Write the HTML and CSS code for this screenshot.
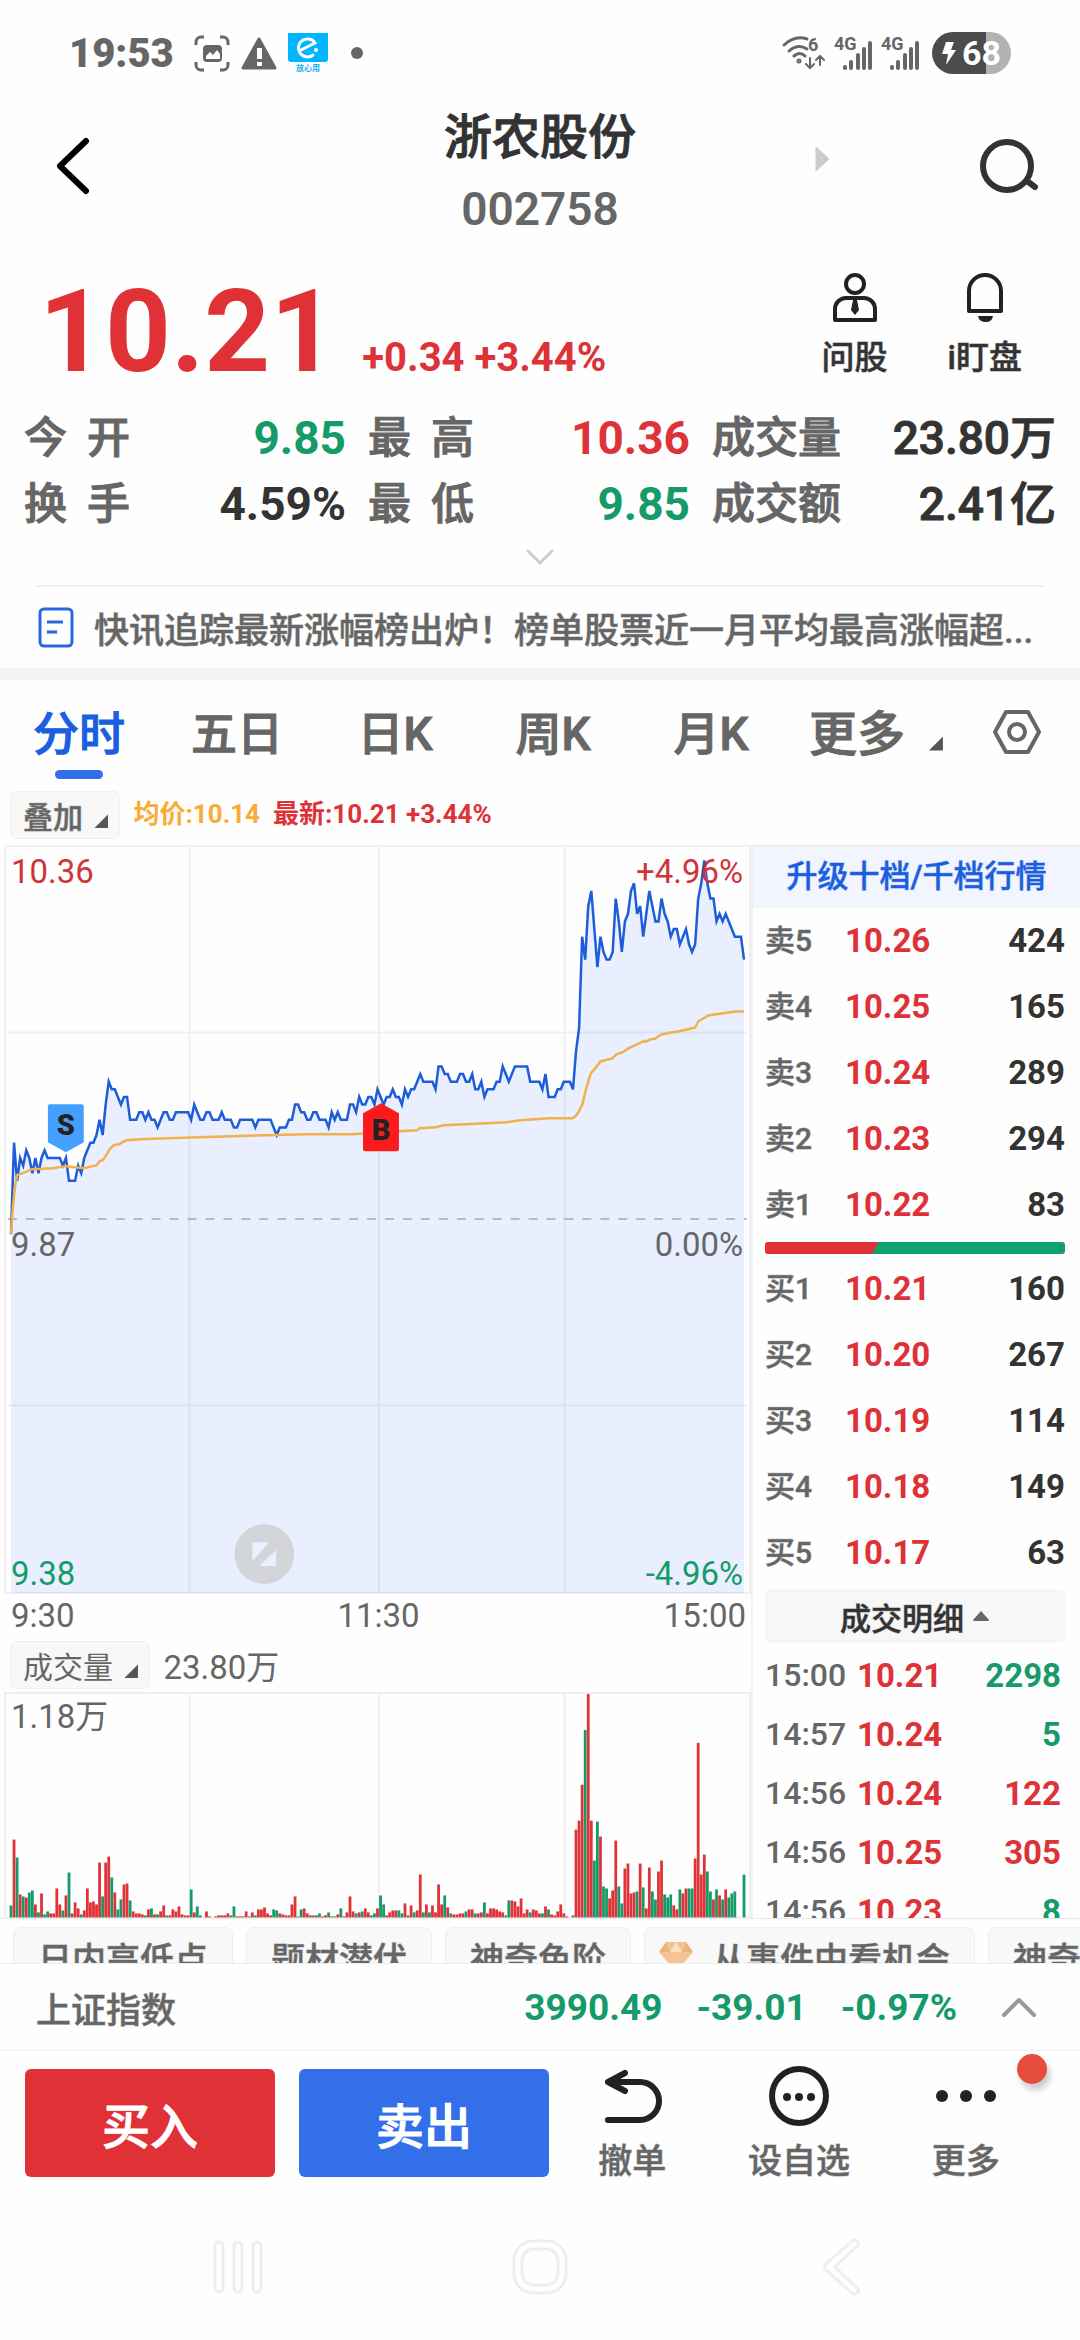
FILE: index.html
```html
<!DOCTYPE html>
<html lang="zh-CN">

<head>
    <meta charset="UTF-8">
    <meta name="viewport" content="width=device-width, initial-scale=1.0">
    <title>浙农股份 002758</title>

    <link rel="stylesheet" href="styles.css">
</head>

<body>

    <div class="status">
        <span class="clock">19:53</span>
        <svg width="36" height="37" viewBox="0 0 36 37" fill="none" stroke="#666" stroke-width="3">
            <path d="M2 10V7a5 5 0 0 1 5-5h3M26 2h3a5 5 0 0 1 5 5v3M34 27v3a5 5 0 0 1-5 5h-3M10 35H7a5 5 0 0 1-5-5v-3" />
            <rect x="9" y="10" width="19" height="17" rx="4" fill="#666" stroke="none" />
            <path d="M12 24v-3l4-4 3 3 4-5 3 4v5z" fill="#fff" stroke="none" />
        </svg>
        <svg width="36" height="34" viewBox="0 0 36 34">
            <path d="M18 3L34 32H2z" fill="#666" stroke="#666" stroke-width="3" stroke-linejoin="round" />
            <path d="M16 12h5v11h-5zM16 26h5v4h-5z" fill="#fff" />
        </svg>
        <svg width="40" height="40" viewBox="0 0 40 40">
            <path d="M0 0h40v26q0 3-3 3H3q-3 0-3-3z" fill="#00b4ff" />
            <path d="M13 17l14-7A9 9 0 1 0 25 22" fill="none" stroke="#fff" stroke-width="3" stroke-linecap="round" />
            <circle cx="28" cy="17" r="2" fill="#fff" />
            <text x="20" y="38" font-size="8" font-weight="700" fill="#19b0f0" text-anchor="middle">放心用</text>
        </svg>
        <span class="dot"></span>
        <div class="signals">
            <svg width="44" height="36" viewBox="0 0 44 36" fill="none" stroke="#666" stroke-width="3" stroke-linecap="round">
                <path d="M2 10Q13 0 25 4M7 16q9-8 18-2M12 21q6-5 11 0" />
                <circle cx="17" cy="26" r="1" />
                <path d="M28 23v9M24 29l4 4 4-4M38 30v-9M34 25l4-4 4 4" stroke-width="2" />
                <text x="26" y="16" font-size="18" font-weight="700" fill="#666" stroke="none">6</text>
            </svg>
            <svg width="39" height="36" viewBox="0 0 39 36" stroke="#666" stroke-width="4" stroke-linecap="round">
                <path d="M11 32v1M17 27v6M24 20v13M30 14v19M36 8v25" />
                <text x="0" y="15" font-size="18" font-weight="700" fill="#666" stroke="none">4G</text>
            </svg>
            <svg width="39" height="36" viewBox="0 0 39 36" stroke="#666" stroke-width="4" stroke-linecap="round">
                <path d="M11 32v1M17 27v6M24 20v13M30 14v19M36 8v25" />
                <text x="0" y="15" font-size="18" font-weight="700" fill="#666" stroke="none">4G</text>
            </svg>
            <div class="battery">
                <svg width="14" height="23" viewBox="0 0 14 23"><path d="M4 0h8L9 8h5L4 23l2-11H0z" fill="#fff" /></svg>
                <span>68</span>
            </div>
        </div>
    </div>

    <header>
        <button class="back" aria-label="返回">
            <svg width="34" height="58" viewBox="0 0 34 58"><path d="M30 4L4 29l26 25" fill="none" stroke="#000" stroke-width="6" stroke-linecap="round" stroke-linejoin="round" /></svg>
        </button>
        <div class="name">
            <h1>浙农股份</h1>
            <p>002758</p>
        </div>
        <button class="next" aria-label="下一只">
            <svg width="15" height="26" viewBox="0 0 15 26"><path d="M1 1v24L14 13z" fill="#ccc" stroke="#ccc" stroke-linejoin="round" /></svg>
        </button>
        <button class="search" aria-label="搜索">
            <svg width="62" height="56" viewBox="0 0 62 56" fill="none" stroke="#333"><circle cx="29" cy="28" r="24" stroke-width="6" /><path d="M49 43l8 6" stroke-width="6" stroke-linecap="round" /></svg>
        </button>
    </header>

    <section class="quote">
        <strong class="price">10.21</strong>
        <span class="change">+0.34 +3.44%</span>
        <button class="tool">
            <svg width="46" height="52" viewBox="0 0 46 52" fill="none" stroke="#222" stroke-width="4">
                <circle cx="23" cy="12" r="9" />
                <path d="M3 48V37a11 11 0 0 1 11-11h18a11 11 0 0 1 11 11v11z" stroke-linejoin="round" />
                <path d="M21 28h4l2 10-4 5-4-5z" fill="#222" stroke="none" />
            </svg>
            问股
        </button>
        <button class="tool">
            <svg width="38" height="52" viewBox="0 0 38 52" fill="none" stroke="#222" stroke-width="4">
                <path d="M3 39V19a16 16 0 0 1 32 0v20z" stroke-linejoin="round" />
                <path d="M12 44h15q-1 6-7 6-7 0-8-6z" fill="#222" stroke="none" />
            </svg>
            i盯盘
        </button>
    </section>

    <dl class="stats">
        <dt><span>今</span><span>开</span></dt><dd class="down">9.85</dd>
        <dt><span>最</span><span>高</span></dt><dd class="up">10.36</dd>
        <dt>成交量</dt><dd>23.80万</dd>
        <dt><span>换</span><span>手</span></dt><dd>4.59%</dd>
        <dt><span>最</span><span>低</span></dt><dd class="down">9.85</dd>
        <dt>成交额</dt><dd>2.41亿</dd>
    </dl>
    <button class="expand" aria-label="展开">
        <svg width="28" height="16" viewBox="0 0 28 16"><path d="M2 2l12 12L26 2" fill="none" stroke="#ccc" stroke-width="3" stroke-linecap="round" /></svg>
    </button>

    <a class="news" href="#">
        <svg width="36" height="41" viewBox="0 0 36 41" fill="none" stroke="#2a66e0" stroke-width="3">
            <rect x="2" y="2" width="32" height="37" rx="4" />
            <path d="M9 15h16M9 25h10" />
        </svg>
        <span>快讯追踪最新涨幅榜出炉！榜单股票近一月平均最高涨幅超...</span>
    </a>

    <nav class="tabs">
        <button class="active">分时</button>
        <button>五日</button>
        <button>日K</button>
        <button>周K</button>
        <button>月K</button>
        <button class="more">更多 <i class="corner"></i></button>
        <button class="setting" aria-label="设置">
            <svg width="50" height="46" viewBox="0 0 50 46" fill="none" stroke="#666" stroke-width="4"><path d="M14 3h22l11 20-11 20H14L3 23z" stroke-linejoin="round" /><circle cx="25" cy="23" r="8" /></svg>
        </button>
    </nav>

    <div class="legend">
        <button class="pick">叠加 <i class="corner"></i></button>
        <span class="avg">均价:10.14</span>
        <span class="up">最新:10.21 +3.44%</span>
    </div>

    <main>
        <div class="charts">
            <svg class="chart" viewBox="0 0 753 751">
                <path class="grid" d="M5 1H752V750H5zM190 1V750M380 1V750M566 1V750M8 188H749M8 562H749" />
                <path id="area" class="area" />
                <path class="zero" d="M8 375H749" />
                <polyline id="priceLine" class="price-line" />
                <polyline id="avgLine" class="avg-line" />
                <path d="M48 262q0-2 2-2h32q2 0 2 2v36l-18 10-18-10z" fill="#459fff" />
                <text class="mark" x="66" y="291">S</text>
                <path d="M364 269l18-10 18 10v36q0 2-2 2h-32q-2 0-2-2z" fill="#fb1a1c" />
                <text class="mark" x="382" y="296">B</text>
                <circle cx="265" cy="711" r="30" fill="#d4d5d9" />
                <path d="M254 699h14q1 0 1 1l-15 17q-1 0-1-1v-16zM277 707v15q0 1-1 1h-14q-1 0-1-1z" fill="#eaf0ff" />
                <text x="11" y="38" class="up">10.36</text>
                <text x="745" y="38" class="up end">+4.96%</text>
                <text x="11" y="412">9.87</text>
                <text x="745" y="412" class="end">0.00%</text>
                <text x="11" y="742" class="down">9.38</text>
                <text x="745" y="742" class="down end">-4.96%</text>
            </svg>
            <div class="times"><span>9:30</span><span>11:30</span><span>15:00</span></div>
            <div class="volume-head">
                <button class="pick">成交量 <i class="corner"></i></button>
                <span>23.80万</span>
            </div>
            <svg class="chart" viewBox="0 0 753 227">
                <path class="grid" d="M5 226V1H752V226zM190 1V226M380 1V226M566 1V226" />
                <g id="bars"></g>
                <text x="11" y="36">1.18万</text>
            </svg>
        </div>

        <aside>
            <a class="upgrade" href="#">升级十档/千档行情</a>
            <table class="book">
                <tr><th>卖5</th><td class="up">10.26</td><td>424</td></tr>
                <tr><th>卖4</th><td class="up">10.25</td><td>165</td></tr>
                <tr><th>卖3</th><td class="up">10.24</td><td>289</td></tr>
                <tr><th>卖2</th><td class="up">10.23</td><td>294</td></tr>
                <tr><th>卖1</th><td class="up">10.22</td><td>83</td></tr>
            </table>
            <div class="ratio"></div>
            <table class="book">
                <tr><th>买1</th><td class="up">10.21</td><td>160</td></tr>
                <tr><th>买2</th><td class="up">10.20</td><td>267</td></tr>
                <tr><th>买3</th><td class="up">10.19</td><td>114</td></tr>
                <tr><th>买4</th><td class="up">10.18</td><td>149</td></tr>
                <tr><th>买5</th><td class="up">10.17</td><td>63</td></tr>
            </table>
            <button class="detail">成交明细 <svg width="18" height="12" viewBox="0 0 18 12"><path d="M9 1l8 9q0 1-1 1H2q-1 0-1-1z" fill="#666" /></svg></button>
            <div class="deals">
                <table>
                    <tr><th>15:00</th><td class="up">10.21</td><td class="down">2298</td></tr>
                    <tr><th>14:57</th><td class="up">10.24</td><td class="down">5</td></tr>
                    <tr><th>14:56</th><td class="up">10.24</td><td class="up">122</td></tr>
                    <tr><th>14:56</th><td class="up">10.25</td><td class="up">305</td></tr>
                    <tr><th>14:56</th><td class="up">10.23</td><td class="down">8</td></tr>
                </table>
            </div>
        </aside>
    </main>

    <div class="chips">
        <button>日内高低点</button>
        <button>题材潜伏</button>
        <button>神奇色阶</button>
        <button class="gem">
            <svg width="34" height="30" viewBox="0 0 34 30"><path d="M7 0h20l7 10-17 20L0 10z" fill="#f3c593" /><path d="M0 10L7 0l4 10zM27 0l7 10H23z" fill="#e9b47d" /><path d="M11 10L17 0l6 10z" fill="#fde0bd" /></svg>
            从事件中看机会
        </button>
        <button>神奇九转</button>
    </div>

    <div class="index">
        <span class="index-name">上证指数</span>
        <span>3990.49</span>
        <span>-39.01</span>
        <span>-0.97%</span>
        <button aria-label="展开指数">
            <svg width="34" height="20" viewBox="0 0 34 20"><path d="M2 18L17 3l15 15" fill="none" stroke="#999" stroke-width="4" stroke-linecap="round" stroke-linejoin="round" /></svg>
        </button>
    </div>

    <footer>
        <button class="trade buy">买入</button>
        <button class="trade sell">卖出</button>
        <button class="action">
            <svg width="60" height="62" viewBox="0 0 60 62" fill="none" stroke="#222" stroke-width="6" stroke-linecap="round" stroke-linejoin="round"><path d="M23 8L6 17l17 9M6 17h32a19 19 0 0 1 0 38H6" /></svg>
            撤单
        </button>
        <button class="action">
            <svg width="60" height="62" viewBox="0 0 60 62" fill="none" stroke="#222" stroke-width="6"><circle cx="30" cy="31" r="27" /><g fill="#222" stroke="none"><circle cx="18" cy="32" r="4" /><circle cx="30" cy="32" r="4" /><circle cx="42" cy="32" r="4" /></g></svg>
            设自选
        </button>
        <button class="action">
            <svg width="60" height="62" viewBox="0 0 60 62" fill="#222"><circle cx="6" cy="31" r="6" /><circle cx="30" cy="31" r="6" /><circle cx="54" cy="31" r="6" /></svg>
            更多
            <i class="badge"></i>
        </button>
    </footer>

    <div class="system">
        <button aria-label="最近">
            <svg width="50" height="54" viewBox="0 0 50 54"><rect x="2" y="2" width="8" height="50" rx="4" /><rect x="21" y="2" width="8" height="50" rx="4" /><rect x="40" y="2" width="8" height="50" rx="4" /></svg>
        </button>
        <button aria-label="主页">
            <svg width="56" height="56" viewBox="0 0 56 56"><rect x="2" y="2" width="52" height="52" rx="19" /><rect x="10" y="10" width="36" height="36" rx="12" /></svg>
        </button>
        <button aria-label="返回桌面">
            <svg width="38" height="58" viewBox="0 0 38 58"><path d="M29 3L3 26q-3 3 0 6l26 23q3 2 5 0 3-3 0-5L12 29 34 8q3-3 0-5-2-2-5 0z" /></svg>
        </button>
    </div>

    <script>
        const svgNS = "http://www.w3.org/2000/svg";

        // 每分钟价格，单位为分，相对昨收 9.87
        const prices = [
            -2, 10, 5, 8, 7, 9, 8, 6, 8, 6, 8, 9, 8, 8, 8, 8, 8, 7, 8, 5, 5, 5, 7, 6, 8, 9, 10, 10, 11, 13,
            11, 15, 18, 17, 17, 16, 15, 16, 16, 13, 13, 13, 14, 14, 13, 14, 13, 13, 12, 13, 14, 14, 13, 13, 14, 14, 14, 14, 14, 13,
            15, 14, 13, 13, 14, 14, 13, 13, 13, 14, 13, 13, 13, 12, 12, 13, 13, 13, 13, 13, 12, 13, 13, 13, 13, 13, 12, 11, 12, 12,
            12, 13, 13, 15, 15, 14, 14, 13, 13, 14, 14, 13, 13, 13, 12, 14, 13, 14, 13, 13, 13, 15, 15, 14, 16, 15, 15, 16, 16, 15,
            17, 16, 15, 16, 16, 17, 16, 16, 15, 17, 16, 17, 17, 18, 19, 18, 18, 18, 18, 17, 20, 20, 19, 19, 18, 18, 18, 19, 19, 18,
            18, 19, 17, 17, 18, 16, 17, 17, 17, 18, 18, 20, 19, 18, 19, 20, 20, 20, 20, 20, 18, 18, 18, 18, 17, 19, 16, 16, 16, 17,
            17, 18, 18, 18, 17, 22, 25, 37, 34, 41, 43, 38, 33, 37, 35, 34, 34, 35, 42, 39, 35, 39, 40, 43, 44, 40, 41, 37, 40, 43,
            41, 39, 39, 42, 40, 39, 37, 38, 38, 36, 37, 38, 36, 35, 36, 42, 44, 47, 44, 42, 42, 39, 40, 39, 40, 39, 38, 37, 37, 37, 34
        ];

        // 均价线 [x, y]
        const average = [
            [11, 390], [13, 362], [15, 343], [17, 331], [23, 329], [32, 325], [53, 324], [66, 322], [84, 324], [97, 321],
            [100, 317], [103, 316], [106, 312], [110, 305], [114, 301], [119, 300], [127, 296], [140, 295], [167, 294],
            [200, 293], [267, 291], [307, 290], [353, 290], [400, 287], [418, 286], [421, 284], [437, 283], [445, 281],
            [508, 278], [522, 276], [550, 274], [574, 274], [577, 272], [580, 268], [584, 260], [587, 247], [591, 233],
            [593, 228], [596, 225], [599, 221], [602, 217], [614, 214], [618, 210], [624, 208], [630, 204], [645, 197],
            [648, 197], [652, 195], [657, 194], [663, 190], [673, 188], [680, 187], [693, 184], [697, 183], [700, 177],
            [705, 174], [710, 171], [737, 167], [746, 167]
        ];

        // 每分钟成交量，r 涨 g 跌
        const volumes = ("g12 r78 g60 r23 g21 r20 g25 g27 r13 g5 r24 g3 g6 r4 r4 r29 r13 g7 r22 g45 r4 r15 r9 g3 r7 r29 r15 r16 r13 r55 " +
            "g21 r55 r61 g40 r25 g8 g18 r33 r34 g17 r6 r4 r4 r3 g2 r8 g9 r3 g3 r6 r12 g2 r2 r8 r6 r11 r3 r2 r2 g28 " +
            "r5 g11 g2 g0 r6 r1 r0 r1 r2 r2 r2 r4 g2 g11 r1 r1 r1 r6 g1 r5 g2 r8 r8 r10 r4 r2 g8 g7 r4 r3 " +
            "r2 r2 r13 r21 g1 g8 r9 r4 r2 g2 r2 g4 r1 r2 g5 r1 g1 r3 g9 r1 r5 r21 r6 g4 r5 g6 r9 r5 g2 g4 " +
            "r9 g22 g13 r2 r5 r7 r7 g7 g4 r14 r2 r12 g5 r7 r43 g5 r13 g5 r12 r5 r33 r13 g22 r10 g4 r3 r3 r4 r4 g6 " +
            "r8 r8 g4 r4 r5 g15 r4 r9 r9 r8 r6 r5 g2 g17 r17 r16 r11 r19 r4 r8 g5 r8 r7 r4 g4 r11 g8 r3 r2 r6 " +
            "r13 r4 r1 g0 g2 r88 r97 r133 g188 r224 r97 g57 g96 r81 g31 g29 r19 r27 r77 g31 g14 r49 r54 r24 r25 g26 r54 g30 r9 r50 " +
            "g26 g18 r46 r57 g23 g20 g23 r12 r8 g28 r24 r29 g29 g29 r59 r175 r43 r63 g46 g26 r18 g28 r22 g18 r28 g20 g24 g26 g0 g0 g43").split(" ");

        function minuteX(minute) {
            return 11 + minute * 735 / 240;
        }

        function toPoints(list) {
            return list.map(p => p.join(",")).join(" ");
        }

        const points = prices.map((p, i) => [minuteX(i), 375 - p * 7.65]);
        document.getElementById("priceLine").setAttribute("points", toPoints(points));
        document.getElementById("avgLine").setAttribute("points", toPoints(average));
        document.getElementById("area").setAttribute("d", "M11,750 L" + toPoints(points) + " L746,750 Z");

        volumes.forEach((v, i) => {
            const height = Number(v.slice(1));
            const bar = document.createElementNS(svgNS, "rect");
            bar.setAttribute("class", v[0] === "r" ? "bar-up" : "bar-down");
            bar.setAttribute("x", minuteX(i) - 1.4);
            bar.setAttribute("y", 226 - height);
            bar.setAttribute("width", 2.8);
            bar.setAttribute("height", height);
            document.getElementById("bars").appendChild(bar);
        });
    </script>

</body>

</html>
```
FILE: styles.css
```css
* {
    box-sizing: border-box;
}

body {
    margin: 0;
    font-family: Roboto, "Noto Sans CJK SC", sans-serif;
    font-weight: 500;
    background-color: #fefefe;
    color: #666;
    min-height: 100vh;
    overflow-x: hidden;
}

button {
    font: inherit;
    color: inherit;
    background: none;
    border: none;
    padding: 0;
    cursor: pointer;
}

a {
    color: inherit;
    text-decoration: none;
}

h1, p, dl, dd {
    margin: 0;
}

svg {
    display: block;
    flex: none;
    overflow: visible;
}

table {
    border-collapse: collapse;
    width: 100%;
}

th, td {
    padding: 0;
    font-weight: 700;
}

/* 中文加粗一点 */
h1, dt, .tabs button, .trade, .stats dd:nth-of-type(3n) {
    -webkit-text-stroke: 1px currentColor;
}

/* 小字描边淡一些 */
.news, .legend .pick, .book th, .chips button, .index-name, .action {
    -webkit-text-stroke: 1px rgba(102, 102, 102, 0.5);
}

.tool, .detail {
    -webkit-text-stroke: 1px rgba(51, 51, 51, 0.5);
}

.upgrade {
    -webkit-text-stroke: 1px rgba(26, 95, 224, 0.5);
}

.up {
    color: #dd3338;
}

.down {
    color: #159b69;
}

/* 状态栏 */
.status {
    display: flex;
    align-items: center;
    gap: 11px;
    height: 106px;
    padding: 0 69px;
}

.clock {
    font-size: 40px;
    font-weight: 900;
    margin-right: 9px;
}

.dot {
    width: 12px;
    height: 12px;
    border-radius: 50%;
    background-color: #666;
    margin-left: 12px;
}

.signals {
    display: flex;
    align-items: center;
    gap: 8px;
    margin-left: auto;
}

.battery {
    display: flex;
    align-items: center;
    justify-content: center;
    gap: 6px;
    width: 79px;
    height: 42px;
    margin-left: 4px;
    border-radius: 21px;
    background: linear-gradient(to right, #4c4c4c 68%, #b2b2b2 68%);
    color: white;
    font-size: 34px;
    font-weight: 700;
}

/* 标题 */
header {
    display: grid;
    grid-template-columns: 1fr auto 1fr auto;
    align-items: start;
    height: 150px;
    padding: 0 40px 0 56px;
}

header button {
    height: 120px;
}

.back {
    justify-self: start;
}

.name {
    text-align: center;
    margin-left: 46px;
}

.name h1 {
    font-size: 48px;
    line-height: 64px;
    font-weight: 500;
    color: #333;
}

.name p {
    font-size: 46px;
    line-height: 78px;
    font-weight: 600;
}

.next {
    justify-self: center;
    padding-bottom: 14px;
    margin-left: 30px;
}

/* 报价 */
.quote {
    display: flex;
    align-items: baseline;
    padding: 16px 58px 0 39px;
    color: #dd3338;
}

.price {
    font-size: 115px;
    line-height: 120px;
    font-weight: 700;
    color: #e03136;
}

.change {
    font-size: 40px;
    font-weight: 700;
    margin-left: 26px;
    margin-right: auto;
}

.tool {
    display: flex;
    flex-direction: column;
    align-items: center;
    align-self: flex-start;
    gap: 14px;
    margin-left: 60px;
    font-size: 33px;
    line-height: 40px;
    color: #333;
}

.stats {
    display: grid;
    grid-template-columns: 106px 1fr 128px 1fr 150px 1fr;
    padding: 13px 24px 0;
    line-height: 66px;
    white-space: nowrap;
}

.stats dt {
    display: flex;
    justify-content: space-between;
    font-size: 43px;
}

.stats dt:not(:nth-of-type(3n+1)) {
    padding-left: 22px;
}

.stats dd {
    font-size: 46px;
    font-weight: 700;
    text-align: right;
    color: #333;
}

.stats dd.up {
    color: #dd3338;
}

.stats dd.down {
    color: #159b69;
}

.stats dd:nth-of-type(3n) {
    font-weight: 500;
}

.expand {
    display: flex;
    justify-content: center;
    width: 100%;
    height: 48px;
    padding-top: 12px;
}

.news {
    display: flex;
    align-items: center;
    gap: 20px;
    height: 83px;
    margin: 0 36px;
    padding-left: 2px;
    border-top: 2px solid #f0f0f0;
    font-size: 35px;
    white-space: nowrap;
}

/* 周期 */
.tabs {
    display: flex;
    height: 111px;
    border-top: 12px solid #f4f4f4;
    padding-right: 38px;
    font-size: 46px;
}

.tabs button {
    flex: 1;
    height: 99px;
}

.tabs .active {
    color: #1a5fe0;
    position: relative;
}

.tabs .active::after {
    content: "";
    position: absolute;
    left: 50%;
    bottom: 0;
    width: 48px;
    height: 9px;
    margin-left: -24px;
    border-radius: 5px;
    background-color: #326ee6;
}

.tabs .more {
    flex: none;
    width: 172px;
    padding-left: 19px;
    text-align: left;
    font-size: 48px;
}

.tabs .more .corner {
    margin-left: 12px;
}

.tabs .setting {
    flex: none;
    width: 80px;
    display: flex;
    align-items: center;
    justify-content: flex-end;
    padding-top: 5px;
}

.corner {
    display: inline-block;
    width: 14px;
    height: 14px;
    margin-left: 4px;
    background-color: #555;
    clip-path: polygon(100% 0, 100% 100%, 0 100%);
}

.legend {
    display: flex;
    align-items: center;
    gap: 13px;
    height: 66px;
    padding: 12px 10px 6px;
    font-size: 26px;
    font-weight: 700;
}

.legend span {
    padding-bottom: 8px;
}

.pick {
    height: 48px;
    padding: 0 11px 0 12px;
    border: 1px solid #f0f0f0;
    border-radius: 6px;
    background-color: #f8f8f8;
    font-size: 30px;
    font-weight: 500;
}

.avg {
    color: #f9ab35;
}

/* 图表 */
main {
    display: grid;
    grid-template-columns: minmax(0, 1fr) 327px;
}

.charts {
    font-size: 33px;
    font-weight: 400;
    border-right: 2px solid #f0f0f0;
}

.chart {
    width: 100%;
    height: auto;
}

.chart text {
    font-size: 33px;
    fill: #666;
}

.chart text.up {
    fill: #d03338;
}

.chart text.down {
    fill: #159b69;
}

.chart .end {
    text-anchor: end;
}

.chart .mark {
    font-size: 29px;
    font-weight: 900;
    fill: #222;
    text-anchor: middle;
}

.grid {
    fill: none;
    stroke: #efefef;
    stroke-width: 2;
}

.area {
    fill: rgba(45, 105, 255, 0.1);
}

.zero {
    stroke: #7f8594;
    stroke-dasharray: 9 9;
}

.price-line, .avg-line {
    fill: none;
    stroke: #1d5dd9;
    stroke-width: 2.5;
}

.avg-line {
    stroke: #f2b04a;
}

.bar-up {
    fill: #df3338;
}

.bar-down {
    fill: #159b69;
}

.times {
    display: grid;
    grid-template-columns: 1fr auto 1fr;
    padding: 0 5px 0 11px;
    line-height: 44px;
}

.times span:last-child {
    text-align: right;
}

.volume-head {
    display: flex;
    align-items: center;
    gap: 13px;
    height: 54px;
    padding: 0 10px;
}

.volume-head .pick {
    font-weight: 400;
}

/* 盘口 */
aside {
    border-top: 1px solid #e3e6ef;
}

.upgrade {
    display: block;
    background-color: #f2f5fd;
    color: #1a5fe0;
    font-size: 31px;
    line-height: 62px;
    text-align: center;
}

.book, .ratio, .detail, .deals {
    margin: 0 15px 0 12px;
}

.book, .deals table {
    width: 300px;
    font-size: 33px;
    line-height: 66px;
    table-layout: fixed;
}

.book th, .deals th {
    width: 80px;
    text-align: left;
    font-size: 30px;
    font-weight: 500;
}

.book td:last-child {
    text-align: right;
    color: #333;
}

.ratio {
    height: 12px;
    margin-top: 4px;
    margin-bottom: 2px;
    border-radius: 3px;
    background: linear-gradient(120deg, #e03136 37%, #12a06b 37%);
}

.detail {
    display: flex;
    align-items: center;
    justify-content: center;
    gap: 8px;
    width: 300px;
    height: 54px;
    margin-top: 3px;
    border-radius: 6px;
    background-color: #f7f7f7;
    font-size: 31px;
    color: #333;
}

.deals {
    height: 275px;
    padding-top: 3px;
    overflow: hidden;
}

.deals table {
    line-height: 59px;
}

.deals th {
    width: 92px;
    font-size: 32px;
}

.deals td:last-child {
    text-align: right;
    padding-right: 4px;
}

/* 功能标签 */
.chips {
    display: flex;
    align-items: flex-start;
    gap: 13px;
    height: 45px;
    padding: 8px 0 0 13px;
    border-top: 1px solid #e8e8e8;
    overflow: hidden;
}

.chips button {
    flex: none;
    height: 60px;
    padding: 0 24px;
    border: 1px solid #eee;
    border-radius: 8px;
    background-color: #f8f8f8;
    font-size: 34px;
    white-space: nowrap;
}

.chips .gem {
    display: flex;
    align-items: center;
    gap: 19px;
    padding: 0 24px 0 14px;
}

.index {
    display: flex;
    align-items: center;
    gap: 34px;
    height: 88px;
    padding: 0 44px 0 36px;
    border-top: 1px solid #eee;
    border-bottom: 1px solid #eee;
    font-size: 37px;
    font-weight: 700;
    color: #159b69;
}

.index-name {
    margin-right: auto;
    font-size: 35px;
    font-weight: 500;
    color: #666;
}

.index button {
    margin-left: 11px;
}

/* 底部操作 */
footer {
    display: flex;
    padding: 14px 31px 0 25px;
}

.trade {
    width: 250px;
    height: 108px;
    margin-top: 4px;
    border-radius: 6px;
    background-color: #e03136;
    color: white;
    font-size: 48px;
}

.sell {
    margin-left: 24px;
    background-color: #336fe8;
}

.action {
    display: flex;
    flex: 1;
    flex-direction: column;
    align-items: center;
    gap: 14px;
    position: relative;
    font-size: 34px;
    line-height: 40px;
}

.badge {
    position: absolute;
    right: 2px;
    top: -11px;
    width: 30px;
    height: 30px;
    border-radius: 50%;
    background-color: #e54d3e;
    box-shadow: 3px 6px 6px rgba(0, 0, 0, 0.2);
}

.system {
    display: flex;
    justify-content: space-between;
    align-items: center;
    height: 120px;
    margin-top: 26px;
    padding: 0 210px;
}

.system button {
    display: flex;
    justify-content: center;
    width: 56px;
}

.system svg {
    fill: none;
    stroke: #eee;
    stroke-width: 3;
}
```
